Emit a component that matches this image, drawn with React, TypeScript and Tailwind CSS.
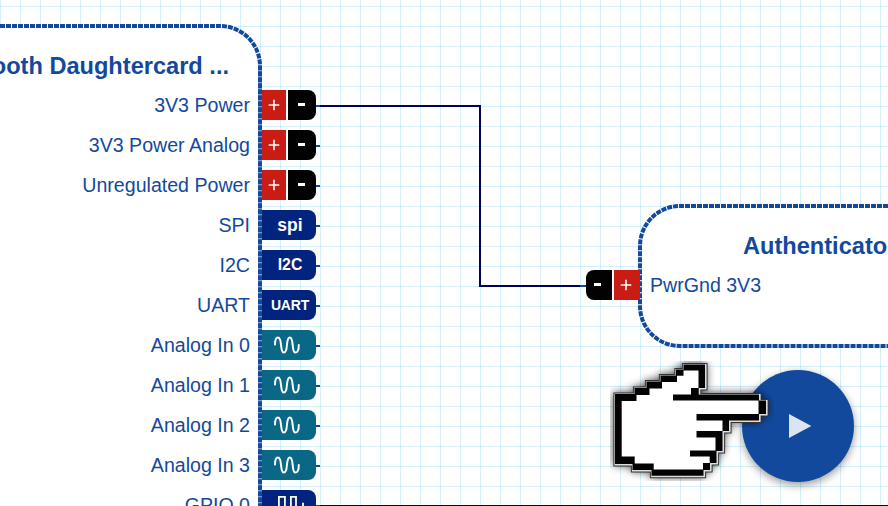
import type { ReactNode } from "react";

type Kind = "power" | "spi" | "i2c" | "uart" | "analog" | "gpio";

const ports: { label: string; kind: Kind }[] = [
  { label: "3V3 Power", kind: "power" },
  { label: "3V3 Power Analog", kind: "power" },
  { label: "Unregulated Power", kind: "power" },
  { label: "SPI", kind: "spi" },
  { label: "I2C", kind: "i2c" },
  { label: "UART", kind: "uart" },
  { label: "Analog In 0", kind: "analog" },
  { label: "Analog In 1", kind: "analog" },
  { label: "Analog In 2", kind: "analog" },
  { label: "Analog In 3", kind: "analog" },
  { label: "GPIO 0", kind: "gpio" },
];

function Plus() {
  return (
    <svg className="size-3" viewBox="0 0 12 12" stroke="#fff" strokeWidth="1.6">
      <path d="M6 .7v10.600M.7 6h10.600" />
    </svg>
  );
}

function Minus() {
  return <span className="h-[3px] w-[7px] bg-white" />;
}

function Solid({ color, children }: { color: string; children: ReactNode }) {
  return (
    <div className={`flex h-[30px] w-[54px] items-center justify-center rounded-r-[8px] font-bold text-white ${color}`}>
      {children}
    </div>
  );
}

function Chip({ kind }: { kind: Kind }) {
  switch (kind) {
    case "power":
      return (
        <div className="flex h-[30px] w-[54px] gap-[2px] bg-white">
          <div className="flex w-6 items-center justify-center bg-[#c81c14]">
            <Plus />
          </div>
          <div className="flex w-7 items-center justify-center rounded-r-[8px] bg-[#020202] pr-[1px] pb-[1px]">
            <Minus />
          </div>
        </div>
      );
    case "spi":
      return (
        <Solid color="bg-[#02247f]">
          <span className="pl-[2px] text-[17.5px] leading-[28px]">spi</span>
        </Solid>
      );
    case "i2c":
      return (
        <Solid color="bg-[#02247f]">
          <span className="pl-[2px] text-[15.8px] leading-[30px]">I2C</span>
        </Solid>
      );
    case "uart":
      return (
        <Solid color="bg-[#02247f]">
          <span className="pl-[2px] text-[14px] leading-[30px] tracking-[-0.2px]">UART</span>
        </Solid>
      );
    case "analog":
      return (
        <Solid color="bg-[#0b6786]">
          <svg className="h-[30px] w-[54px]" viewBox="0 0 54 30" fill="none" stroke="#fff" strokeWidth="2" strokeLinecap="round">
            <path d="M13 14.5C13 10 14 7.4 16 7.4C20.800 7.400 17.300 22.600 22 22.600S23.200 7.400 27.800 7.400S29 22.600 33.500 22.600C35.700 22.600 36.800 20 36.800 15" />
          </svg>
        </Solid>
      );
    default:
      return (
        <Solid color="bg-[#02247f]">
          <svg className="h-[30px] w-[54px]" viewBox="0 0 54 30" fill="none" stroke="#fff" strokeWidth="1.8">
            <path d="M12 21h4.900V6.900h6V21h6V6.900h5.100V21h7V12.800" />
          </svg>
        </Solid>
      );
  }
}

function PortRow({ label, kind }: { label: string; kind: Kind }) {
  return (
    <div className="flex h-10 items-center">
      <span className="flex-1 pr-[12px] text-right text-[19.6px] leading-[30px] whitespace-nowrap">{label}</span>
      <Chip kind={kind} />
      <span className="mt-[2px] h-[2px] w-1 bg-[#13499d]" />
    </div>
  );
}

function Hand() {
  const outline =
    "615,394 634.5,394 634.5,388 646.5,388 646.5,381.5 660.5,381.5 660.5,375.5 676,375.5 676,369.5 683.5,369.5 683.5,364.5 705,364.5 705,388 698.7,388 698.7,394.5 759,394.5 759,400.5 766,400.5 766,414 759,414 759,420.5 729,420.5 729,431 722.5,431 722.5,451 716.5,451 716.5,463 710,463 710,470 703.5,470 703.5,475.7 651.5,475.7 651.5,470 632.5,470 632.5,464 615,464";
  const inside =
    "621.7,401 636.5,401 636.5,395 649.5,395 649.5,388.5 662,388.5 662,382 677,382 677,375.7 683.5,375.7 683.5,370.5 698.5,370.5 698.5,388 691,388 691,394.5 673,394.5 673,400.5 758.5,400.5 758.5,414 696.5,414 696.5,420.5 722.5,420.5 722.5,431 696.5,431 696.5,437.5 715.5,437.5 715.5,450.5 690,450.5 690,456.5 709.7,456.5 709.7,463 703,463 703,469.5 653.7,469.5 653.7,463.5 634.7,463.5 634.7,456.5 621.7,456.5";
  return (
    <svg className="absolute top-[361px] left-[610px] h-[120px] w-[164px]" viewBox="610 361 164 120">
      <defs>
        <filter id="handShade" x="-20%" y="-20%" width="140%" height="140%">
          <feGaussianBlur stdDeviation="4" />
        </filter>
      </defs>
      <polygon points={outline} fill="#000" stroke="#000" strokeWidth="3" opacity=".75" filter="url(#handShade)" />
      <g transform="translate(.5 .5)">
        <polygon points={outline} fill="#000" stroke="#333" strokeWidth="4.200" />
        <polygon points={outline} fill="#000" stroke="#ddd" strokeWidth="2.200" />
      </g>
      <polygon points={outline} fill="#030303" />
      <polygon points={inside} fill="#fff" />
    </svg>
  );
}

export default function App() {
  return (
    <div className="relative h-[506px] w-[888px] overflow-hidden bg-white font-['Liberation_Sans',Arial,sans-serif] text-[#13499d]">
      <svg className="absolute inset-0 h-full w-full" viewBox="0 0 888 506" fill="none">
        <defs>
          <pattern id="grid" width="20" height="20" patternUnits="userSpaceOnUse" y="6">
            <path d="M.5 0v20M0 .5h20" stroke="#00a0e6" strokeOpacity=".16" />
          </pattern>
        </defs>
        <rect width="888" height="506" fill="url(#grid)" />
        <path d="M-60 26H220A40 40 0 0 1 260 66V520H-60Z" fill="#fff" />
        <path d="M900 206H680A40 40 0 0 0 640 246V306A40 40 0 0 0 680 346H900Z" fill="#fff" />
        <path d="M320 106H480V286H582" stroke="#00005f" strokeWidth="2" />
        <path d="M316 506H888" stroke="#00005f" strokeWidth="2" />
        <g stroke="#13499d" strokeWidth="4">
          <path d="M260 66V520" strokeOpacity=".4" />
          <path d="M-60 26H220A40 40 0 0 1 260 66V520" strokeDasharray="5 1" />
          <path d="M900 206H680A40 40 0 0 0 640 246V306A40 40 0 0 0 680 346H900" strokeDasharray="5 1" />
        </g>
      </svg>

      <section className="absolute top-[26px] left-[-90px] w-[410px]">
        <h2 className="h-[59px] pt-[24px] pr-[91px] text-right text-[23.6px] leading-[32px] font-bold whitespace-nowrap">
          Bluetooth Daughtercard ...
        </h2>
        {ports.map((p) => (
          <PortRow key={p.label} {...p} />
        ))}
      </section>

      <section className="absolute top-[206px] left-[580px] w-[400px]">
        <h2 className="h-[59px] pt-[24px] pl-[163px] text-[23.6px] leading-[32px] font-bold whitespace-nowrap">Authenticator</h2>
        <div className="flex h-10 items-center">
          <span className="mt-[2px] h-[2px] w-[6px] bg-[#13499d]" />
          <div className="flex h-[30px] gap-[2px] bg-white">
            <div className="flex w-[26px] items-center justify-center rounded-l-[8px] bg-[#020202] pr-[3px] pb-[1px]">
              <Minus />
            </div>
            <div className="flex w-[26px] items-center justify-center bg-[#c81c14] pr-[2px]">
              <Plus />
            </div>
          </div>
          <span className="pl-[10px] text-[19.6px] leading-[30px] whitespace-nowrap">PwrGnd 3V3</span>
        </div>
      </section>

      <button
        aria-label="Play"
        className="absolute top-[370px] left-[742px] size-28 rounded-full bg-[#13499d] shadow-[0_3px_8px_rgba(0,0,0,0.4)]"
      >
        <svg className="size-28" viewBox="0 0 112 112">
          <path d="M47 44L69.300 56L47 68Z" fill="#dce4f1" />
        </svg>
      </button>
      <Hand />
    </div>
  );
}
